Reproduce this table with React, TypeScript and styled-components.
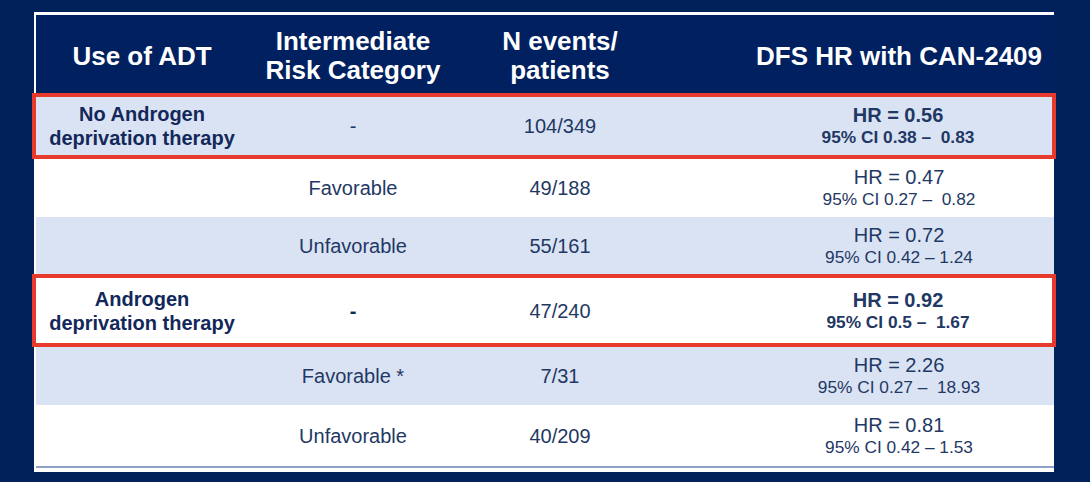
import React from "react";
import styled, { createGlobalStyle } from "styled-components";

const Global = createGlobalStyle`
  html, body { margin: 0; padding: 0; }
  body {
    width: 1090px;
    height: 482px;
    overflow: hidden;
    background: #00215a;
    font-family: "Liberation Sans", Arial, sans-serif;
  }
`;

const Page = styled.div`
  width: 1090px;
  height: 482px;
  padding: 12px 0 0 34px;
  box-sizing: border-box;
`;

const Panel = styled.div`
  width: 1020px;
  height: 460px;
  box-sizing: border-box;
  background: #ffffff;
  padding: 3px 0 0 2px;
  display: flex;
  flex-direction: column;
`;

const COLS = "212px 210px 204px 1fr";

const HeaderRow = styled.div`
  display: grid;
  grid-template-columns: ${COLS};
  height: 78px;
  background: #002060;
  color: #ffffff;
  font-weight: bold;
  font-size: 26px;
  line-height: 29px;
`;

const HeadCell = styled.div<{ $shift?: number }>`
  display: flex;
  align-items: center;
  justify-content: center;
  text-align: center;
  padding-left: ${(p) => p.$shift ?? 0}px;
  padding-top: 4px;
`;

const Row = styled.div<{ $h: number; $shade?: boolean; $mark?: boolean }>`
  display: grid;
  grid-template-columns: ${COLS};
  height: ${(p) => p.$h}px;
  box-sizing: border-box;
  background: ${(p) => (p.$shade ? "#dae3f3" : "#ffffff")};
  color: #1f3864;
  border: ${(p) => (p.$mark ? "4px solid #e8392d" : "none")};
  margin: ${(p) => (p.$mark ? "0 -2px 0 -4px" : "0")};
`;

const Cell = styled.div<{ $bold?: boolean; $shift?: number }>`
  display: flex;
  flex-direction: column;
  align-items: center;
  justify-content: center;
  text-align: center;
  font-size: 20px;
  line-height: 24px;
  font-weight: ${(p) => (p.$bold ? "bold" : "normal")};
  color: ${(p) => (p.$bold ? "#13285a" : "#1f3864")};
  padding-left: ${(p) => p.$shift ?? 0}px;
`;

const HrMain = styled.div<{ $bold?: boolean }>`
  font-size: 20px;
  line-height: 23px;
  font-weight: ${(p) => (p.$bold ? "bold" : "normal")};
`;

const HrCi = styled.div<{ $bold?: boolean }>`
  font-size: 17.3px;
  line-height: 21px;
  white-space: pre;
  font-weight: ${(p) => (p.$bold ? "bold" : "normal")};
`;

const BottomRule = styled.div`
  height: 2px;
  background: #8ea2c8;
`;

type RowData = {
  h: number;
  shade?: boolean;
  mark?: boolean;
  riskBold?: boolean;
  adt?: string[];
  risk: string;
  n: string;
  hr: string;
  ci: string;
};

const rows: RowData[] = [
  { h: 66, shade: true, mark: true, adt: ["No Androgen", "deprivation therapy"], risk: "-", n: "104/349", hr: "HR = 0.56", ci: "95% CI 0.38 –  0.83" },
  { h: 58, risk: "Favorable", n: "49/188", hr: "HR = 0.47", ci: "95% CI 0.27 –  0.82" },
  { h: 57, shade: true, risk: "Unfavorable", n: "55/161", hr: "HR = 0.72", ci: "95% CI 0.42 – 1.24" },
  { h: 73, mark: true, riskBold: true, adt: ["Androgen", "deprivation therapy"], risk: "-", n: "47/240", hr: "HR = 0.92", ci: "95% CI 0.5 –  1.67" },
  { h: 58, shade: true, risk: "Favorable *", n: "7/31", hr: "HR = 2.26", ci: "95% CI 0.27 –  18.93" },
  { h: 61, risk: "Unfavorable", n: "40/209", hr: "HR = 0.81", ci: "95% CI 0.42 – 1.53" },
];

export default function App() {
  return (
    <>
      <Global />
      <Page>
        <Panel>
          <HeaderRow>
            <HeadCell>Use of ADT</HeadCell>
            <HeadCell>
              Intermediate
              <br />
              Risk Category
            </HeadCell>
            <HeadCell>
              N events/
              <br />
              patients
            </HeadCell>
            <HeadCell $shift={82}>DFS HR with CAN-2409</HeadCell>
          </HeaderRow>
          {rows.map((r, i) => (
            <Row key={i} $h={r.h} $shade={r.shade} $mark={r.mark}>
              <Cell $bold>
                {r.adt?.map((l) => (
                  <div key={l}>{l}</div>
                ))}
              </Cell>
              <Cell $bold={r.riskBold}>{r.risk}</Cell>
              <Cell>{r.n}</Cell>
              <Cell $shift={82}>
                <HrMain $bold={r.mark}>{r.hr}</HrMain>
                <HrCi $bold={r.mark}>{r.ci}</HrCi>
              </Cell>
            </Row>
          ))}
          <BottomRule />
        </Panel>
      </Page>
    </>
  );
}
